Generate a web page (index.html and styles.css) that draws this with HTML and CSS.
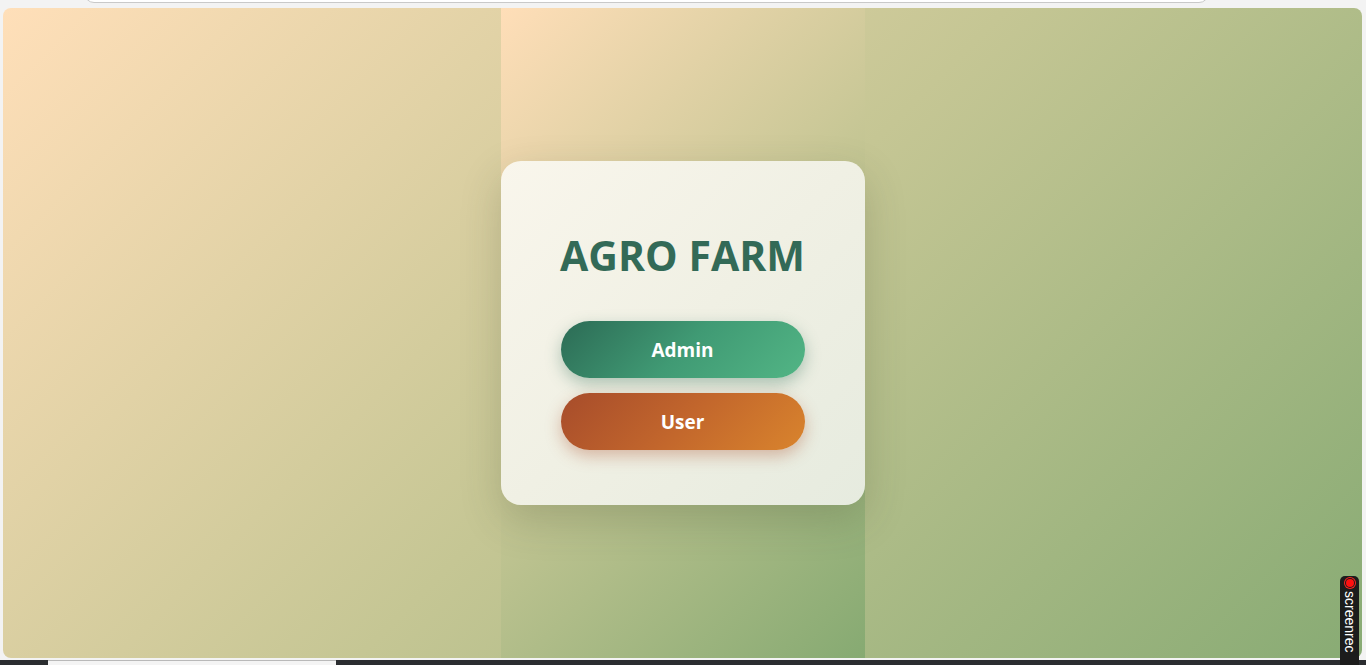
FILE: index.html
```html
<!DOCTYPE html>
<html lang="en">
<head>
<meta charset="utf-8">
<title>Agro Farm</title>
<link rel="stylesheet" href="styles.css">
</head>
<body>
  <div class="topbar"><div class="urlbox"></div></div>
  <main class="viewport">
    <div class="column">
      <div class="card">
        <h1 class="title">AGRO FARM</h1>
        <div class="buttons">
          <button class="btn btn-admin">Admin</button>
          <button class="btn btn-user">User</button>
        </div>
      </div>
    </div>
  </main>
  <div class="taskbar"><div class="taskbar-item"></div></div>
  <div class="rec-badge"><span class="rec-dot"></span><span class="rec-text">screenrec</span></div>
</body>
</html>
```
FILE: styles.css
```css
html, body {
  margin: 0;
  padding: 0;
}
body {
  width: 1366px;
  height: 665px;
  background: #f3f3f3;
  display: flex;
  flex-direction: column;
  overflow: hidden;
  position: relative;
  font-family: "Open Sans", "Noto Sans", sans-serif;
}
.topbar {
  height: 8px;
  overflow: hidden;
  flex: none;
}
.urlbox {
  margin-left: 84px;
  width: 1125px;
  height: 20px;
  margin-top: -17px;
  box-sizing: border-box;
  border: 1px solid #c9c9c9;
  border-radius: 10px;
  background: #ffffff;
}
.viewport {
  flex: none;
  height: 650px;
  margin: 0 4px 0 3px;
  border-radius: 8px;
  overflow: hidden;
  background: linear-gradient(135deg, #ffdfb9 0%, #c5c694 50%, #88ab74 100%);
  display: flex;
  justify-content: center;
}
.column {
  width: 364px;
  background: linear-gradient(135deg, #ffdeb8 0%, #c3c593 50%, #86aa72 100%);
  display: flex;
  align-items: center;
}
.card {
  width: 364px;
  height: 344px;
  box-sizing: border-box;
  padding: 60px 40px 0;
  border-radius: 20px;
  background: linear-gradient(135deg, #f9f6ec 0%, #f0f0e4 50%, #e6ebdf 100%);
  box-shadow: 0 15px 40px rgba(60, 70, 40, 0.22);
  display: flex;
  flex-direction: column;
  align-items: center;
}
.title {
  margin: 0;
  font-size: 41px;
  font-weight: 700;
  letter-spacing: 0;
  line-height: 68px;
  white-space: nowrap;
  color: #336a57;
}
.buttons {
  margin-top: 32px;
  width: 244px;
  display: flex;
  flex-direction: column;
  gap: 15px;
}
.btn {
  height: 57px;
  width: 100%;
  border: none;
  border-radius: 30px;
  font-family: "Open Sans", "Noto Sans", sans-serif;
  font-size: 19px;
  font-weight: 700;
  color: #ffffff;
  cursor: pointer;
}
.btn-admin {
  background: linear-gradient(135deg, #2c6b55 0%, #409a74 50%, #52b585 100%);
  box-shadow: 0 6px 16px rgba(45, 110, 85, 0.35);
}
.btn-user {
  background: linear-gradient(135deg, #a74c2b 0%, #c2662c 50%, #d9842d 100%);
  box-shadow: 0 6px 16px rgba(170, 75, 40, 0.35);
}
.taskbar {
  flex: none;
  margin-top: 2px;
  height: 5px;
  background: #2b2d30;
  display: flex;
}
.taskbar-item {
  margin-left: 48px;
  width: 288px;
  background: #f4f4f4;
  border-top: 1px solid #b9b9b9;
  box-sizing: border-box;
}
.rec-badge {
  position: absolute;
  left: 1340px;
  top: 576px;
  width: 19px;
  height: 100px;
  background: #1c1c1c;
  border-radius: 5px 5px 0 0;
  display: flex;
  flex-direction: column;
  align-items: center;
  padding-top: 3px;
  box-sizing: border-box;
}
.rec-dot {
  width: 8px;
  height: 8px;
  border-radius: 50%;
  background: #ff1010;
  box-shadow: 0 0 0 1px #1c1c1c, 0 0 0 2px #ff2020;
  flex: none;
}
.rec-text {
  writing-mode: vertical-rl;
  color: #ffffff;
  font-family: "Liberation Sans", Arial, sans-serif;
  font-size: 14px;
  line-height: 18px;
  margin-top: 4px;
}
```
